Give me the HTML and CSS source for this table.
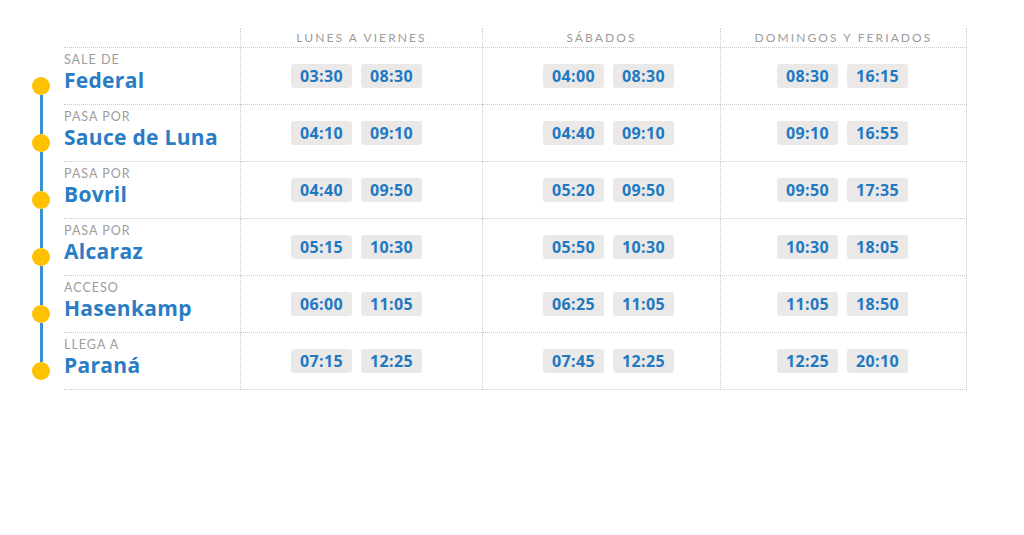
FILE: index.html
```html
<!DOCTYPE html>
<html lang="es">
<head>
<meta charset="utf-8">
<title>Horarios</title>
<link rel="stylesheet" href="styles.css">
</head>
<body>
<div class="schedule">
  <div class="row head">
    <div class="tl"></div>
    <div class="stop"></div>
    <div class="col">LUNES A VIERNES</div>
    <div class="col">SÁBADOS</div>
    <div class="col last">DOMINGOS Y FERIADOS</div>
  </div>

  <div class="row">
    <div class="tl first"><span class="seg"></span><span class="dot"></span><span class="seg grow"></span></div>
    <div class="stop"><span class="lbl">SALE DE</span><span class="name">Federal</span></div>
    <div class="times wk"><span class="pill">03:30</span><span class="pill">08:30</span></div>
    <div class="times sat"><span class="pill">04:00</span><span class="pill">08:30</span></div>
    <div class="times last"><span class="pill">08:30</span><span class="pill">16:15</span></div>
  </div>

  <div class="row">
    <div class="tl"><span class="seg"></span><span class="dot"></span><span class="seg grow"></span></div>
    <div class="stop"><span class="lbl">PASA POR</span><span class="name">Sauce de Luna</span></div>
    <div class="times wk"><span class="pill">04:10</span><span class="pill">09:10</span></div>
    <div class="times sat"><span class="pill">04:40</span><span class="pill">09:10</span></div>
    <div class="times last"><span class="pill">09:10</span><span class="pill">16:55</span></div>
  </div>

  <div class="row">
    <div class="tl"><span class="seg"></span><span class="dot"></span><span class="seg grow"></span></div>
    <div class="stop"><span class="lbl">PASA POR</span><span class="name">Bovril</span></div>
    <div class="times wk"><span class="pill">04:40</span><span class="pill">09:50</span></div>
    <div class="times sat"><span class="pill">05:20</span><span class="pill">09:50</span></div>
    <div class="times last"><span class="pill">09:50</span><span class="pill">17:35</span></div>
  </div>

  <div class="row">
    <div class="tl"><span class="seg"></span><span class="dot"></span><span class="seg grow"></span></div>
    <div class="stop"><span class="lbl">PASA POR</span><span class="name">Alcaraz</span></div>
    <div class="times wk"><span class="pill">05:15</span><span class="pill">10:30</span></div>
    <div class="times sat"><span class="pill">05:50</span><span class="pill">10:30</span></div>
    <div class="times last"><span class="pill">10:30</span><span class="pill">18:05</span></div>
  </div>

  <div class="row">
    <div class="tl"><span class="seg"></span><span class="dot"></span><span class="seg grow"></span></div>
    <div class="stop"><span class="lbl">ACCESO</span><span class="name">Hasenkamp</span></div>
    <div class="times wk"><span class="pill">06:00</span><span class="pill">11:05</span></div>
    <div class="times sat"><span class="pill">06:25</span><span class="pill">11:05</span></div>
    <div class="times last"><span class="pill">11:05</span><span class="pill">18:50</span></div>
  </div>

  <div class="row">
    <div class="tl final"><span class="seg"></span><span class="dot"></span><span class="seg grow"></span></div>
    <div class="stop"><span class="lbl">LLEGA A</span><span class="name">Paraná</span></div>
    <div class="times wk"><span class="pill">07:15</span><span class="pill">12:25</span></div>
    <div class="times sat"><span class="pill">07:45</span><span class="pill">12:25</span></div>
    <div class="times last"><span class="pill">12:25</span><span class="pill">20:10</span></div>
  </div>
</div>
</body>
</html>
```

FILE: styles.css
```css
html, body {
  margin: 0;
  padding: 0;
  background: #ffffff;
}

body {
  font-family: "Open Sans", "Liberation Sans", sans-serif;
}

.schedule {
  padding: 28px 0 0 32px;
}

.row {
  display: grid;
  grid-template-columns: 32px 176px 242px 238px 247px;
  height: 57px;
}

.row.head {
  height: 20px;
}

.row > div {
  box-sizing: border-box;
}

.stop, .col, .times {
  border-bottom: 1px dotted #c9c9c9;
}

.col, .times {
  border-left: 1px dotted #c9c9c9;
}

.col.last, .times.last {
  border-right: 1px dotted #c9c9c9;
}

.col {
  font-family: "Lato", "Open Sans", sans-serif;
  font-size: 12px;
  letter-spacing: 2.1px;
  color: #9c9c9c;
  text-align: center;
  line-height: 19px;
}

.tl {
  display: flex;
  flex-direction: column;
  align-items: center;
  width: 18px;
}

.seg {
  width: 3px;
  background: #3d8fd3;
  height: 29px;
}

.seg.grow {
  flex: 1;
}

.tl.first .seg:first-child,
.tl.final .seg.grow {
  background: transparent;
}

.dot {
  width: 18px;
  height: 18px;
  border-radius: 50%;
  background: #ffc200;
  flex: none;
}

.stop {
  display: flex;
  flex-direction: column;
  padding-top: 4px;
}

.lbl {
  font-family: "Lato", "Open Sans", sans-serif;
  font-size: 12.5px;
  letter-spacing: 1px;
  color: #9d9d9d;
  line-height: 15px;
}

.name {
  font-size: 21px;
  font-weight: 700;
  letter-spacing: 0.3px;
  color: #2a7dc4;
  line-height: 27px;
}

.times {
  display: flex;
  align-items: center;
  justify-content: center;
  gap: 9px;
}

.times.wk {
  padding-right: 10px;
}

.times.sat {
  padding-left: 14px;
}

.times.last {
  padding-right: 2px;
}

.pill {
  width: 61px;
  height: 24px;
  border-radius: 3px;
  background: #ebe8e8;
  color: #1d79c2;
  font-size: 16px;
  font-weight: 700;
  letter-spacing: 0.4px;
  display: flex;
  align-items: center;
  justify-content: center;
}
```
